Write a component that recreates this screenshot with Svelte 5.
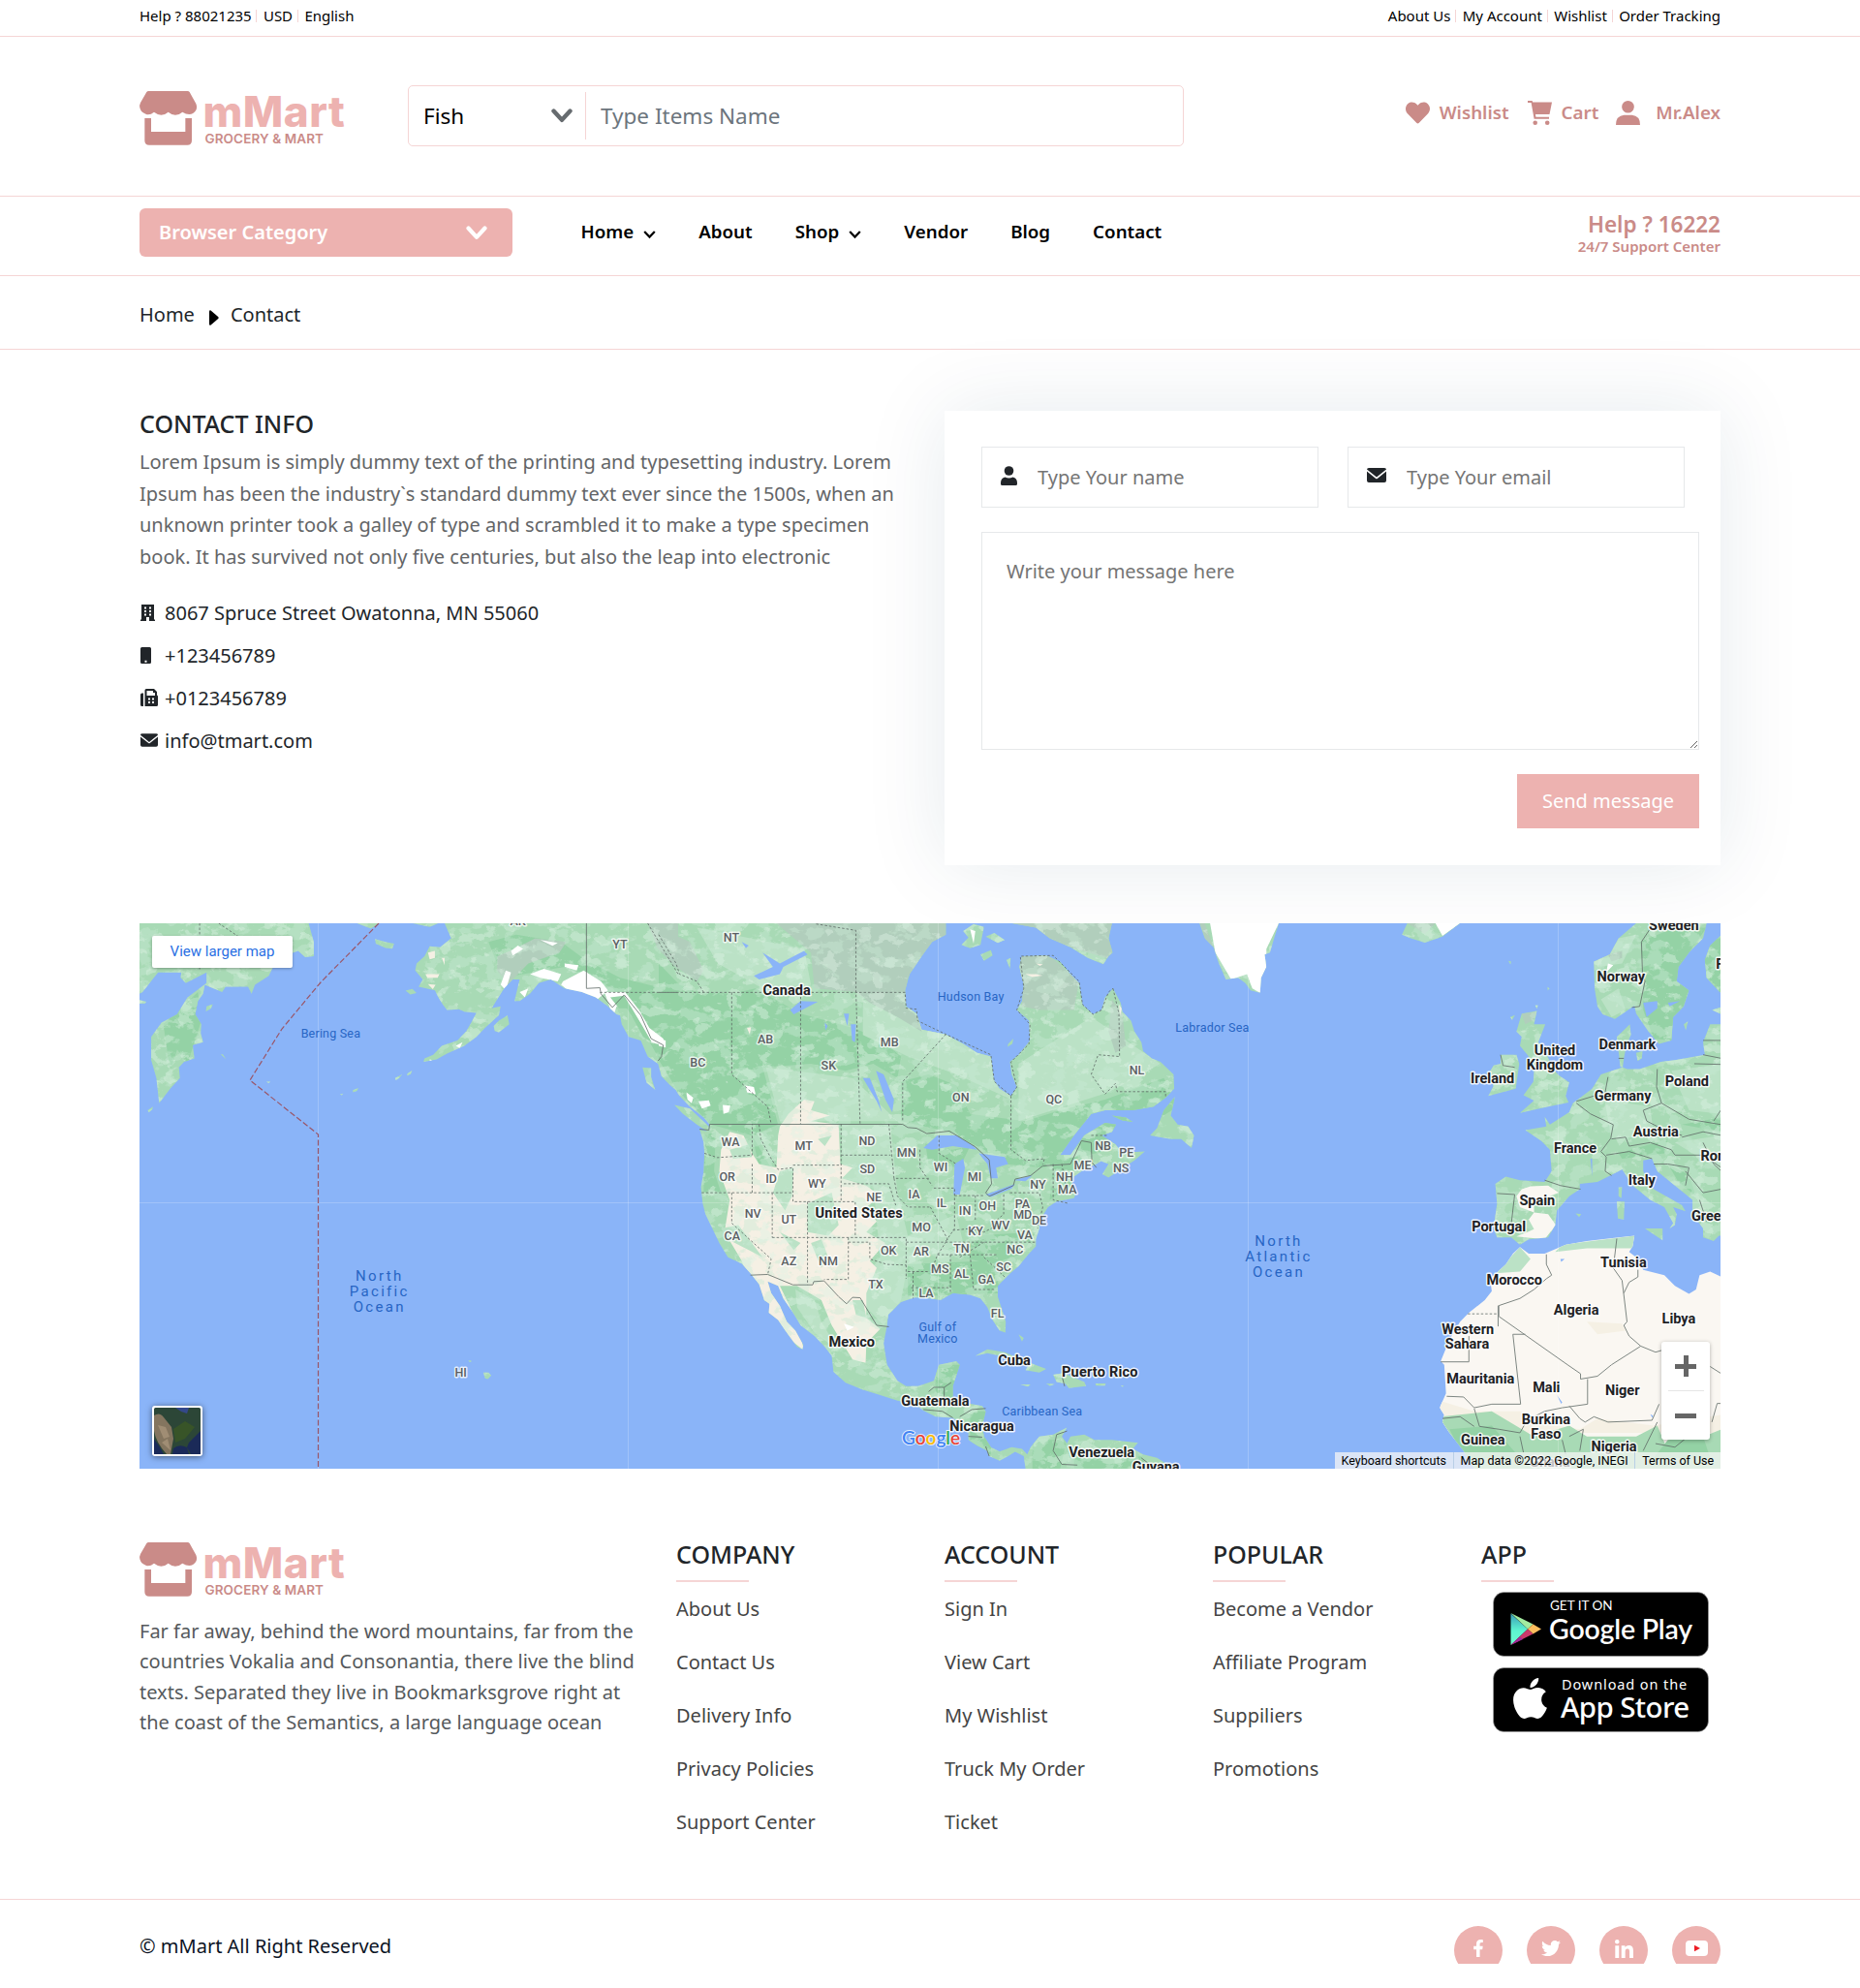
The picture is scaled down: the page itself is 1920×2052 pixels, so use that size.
<script>
  const topLeft = ['Help ? 88021235', 'USD', 'English'];
  const topRight = ['About Us', 'My Account', 'Wishlist', 'Order Tracking'];
  const nav = [
    { label: 'Home', menu: true },
    { label: 'About' },
    { label: 'Shop', menu: true },
    { label: 'Vendor' },
    { label: 'Blog' },
    { label: 'Contact' }
  ];
  const columns = [
    { title: 'COMPANY', links: ['About Us', 'Contact Us', 'Delivery Info', 'Privacy Policies', 'Support Center'] },
    { title: 'ACCOUNT', links: ['Sign In', 'View Cart', 'My Wishlist', 'Truck My Order', 'Ticket'] },
    { title: 'POPULAR', links: ['Become a Vendor', 'Affiliate Program', 'Suppiliers', 'Promotions'] }
  ];
  const heart = 'M462.3 62.6C407.5 15.9 326 24.3 275.7 76.2L256 96.5l-19.7-20.3C186.1 24.3 104.5 15.9 49.7 62.6c-62.8 53.6-66.1 149.8-9.9 207.9l193.5 199.8c12.5 12.9 32.8 12.9 45.3 0l193.5-199.8c56.3-58.1 53-154.3-9.8-207.9z';
  const facebook = 'M279.14 288l14.22-92.66h-88.91v-60.13c0-25.35 12.42-50.06 52.24-50.06h40.42V6.26S260.43 0 225.36 0c-73.22 0-121.08 44.38-121.08 124.72v70.62H22.89V288h81.39v224h100.17V288z';
  const twitter = 'M459.37 151.716c.325 4.548.325 9.097.325 13.645 0 138.72-105.583 298.558-298.558 298.558-59.452 0-114.68-17.219-161.137-47.106 8.447.974 16.568 1.299 25.34 1.299 49.055 0 94.213-16.568 130.274-44.832-46.132-.975-84.792-31.188-98.112-72.772 6.498.974 12.995 1.624 19.818 1.624 9.421 0 18.843-1.3 27.614-3.573-48.081-9.747-84.143-51.98-84.143-102.985v-1.299c13.969 7.797 30.214 12.67 47.431 13.319-28.264-18.843-46.781-51.005-46.781-87.391 0-19.492 5.197-37.36 14.294-52.954 51.655 63.675 129.3 105.258 216.365 109.807-1.624-7.797-2.599-15.918-2.599-24.04 0-57.828 46.782-104.934 104.934-104.934 30.213 0 57.502 12.67 76.67 33.137 23.715-4.548 46.456-13.32 66.599-25.34-7.798 24.366-24.366 44.833-46.132 57.827 21.117-2.273 41.584-8.122 60.426-16.243-14.292 20.791-32.161 39.308-52.628 54.253z';
  const linkedin = 'M100.28 448H7.4V148.9h92.88zM53.79 108.1C24.09 108.1 0 83.5 0 53.8a53.79 53.79 0 0 1 107.58 0c0 29.7-24.1 54.3-53.79 54.3zM447.9 448h-92.68V302.4c0-34.7-.7-79.2-48.29-79.2-48.29 0-55.69 37.7-55.69 76.7V448h-92.78V148.9h89.08v40.8h1.3c12.4-23.5 42.69-48.3 87.88-48.3 94 0 111.28 61.9 111.28 142.3V448z';
  const apple = 'M318.7 268.7c-.2-36.7 16.4-64.4 50-84.8-18.8-26.9-47.2-41.7-84.7-44.6-35.5-2.8-74.3 20.7-88.5 20.7-15 0-49.4-19.7-76.4-19.7C63.3 141.2 4 184.8 4 273.5q0 39.3 14.4 81.2c12.8 36.7 59 126.7 107.2 125.2 25.2-.6 43-17.9 75.8-17.9 31.8 0 48.3 17.9 76.4 17.9 48.6-.7 90.4-82.5 102.6-119.3-65.2-30.7-61.7-90-61.7-91.9zm-56.6-164.2c27.3-32.4 24.8-61.9 24-72.5-24.1 1.4-52 16.4-67.9 34.9-17.5 19.8-27.8 44.3-25.6 71.9 26.1 2 49.9-11.4 69.5-34.3z';

  // Map sheets: each has its own drawing grid, placed on the map by a transform.
  const sheets = {
    w: { x: 140, y: 950, sx: 0.35714, sy: 0.36990 },
    m: { x: 680, y: 950, sx: 0.35714, sy: 0.36990 },
    e: { x: 1220, y: 950, sx: 0.36353, sy: 0.36990 }
  };
  const tf = (s) => `translate(${sheets[s].x} ${sheets[s].y}) scale(${sheets[s].sx} ${sheets[s].sy})`;
  const px = (s, x) => sheets[s].x + x * sheets[s].sx;
  const py = (s, y) => sheets[s].y + y * sheets[s].sy;

  const land = [
    // Kamchatka
    ['w', 'M11 8H500L515 60 515 100 490 103 470 85 440 95 400 125 385 155 345 180 335 205 325 185 260 185 250 200 200 180 195 205 180 225 172 262 190 290 188 315 195 340 165 348 170 385 140 395 125 410 128 440 100 470 68 510 60 440 45 390 45 325 75 285 120 262 150 215 205 175 205 145 145 175 130 160 132 145 65 145 20 200 11 205z'],
    ['w', 'M11 222l20 5-4 5-16 0zM35 530l15-10-2 8-10 8zM205 240l18-6-5 12-15 8zM692 52l30 8 25 5-5 14-20-2-28-12zM640 8h65l-25 15zM800 8h75l-25 10zM780 196l20-5 12 12-18 4z'],
    // Alaska
    ['w', 'M893 8L912 50 880 75 850 72 835 100 812 120 808 140 830 165 818 185 865 195 875 215 888 235 900 250 935 248 950 255 985 258 970 285 955 310 930 335 885 350 860 375 835 385 832 395 870 388 900 372 950 350 985 325 1010 300 1050 265 1055 240 1030 245 1045 220 1065 190 1090 165 1110 165 1095 225 1110 225 1140 205 1165 175 1200 165 1240 190 1290 200 1330 215 1365 240 1390 262 1400 265 1405 290 1425 325 1460 335 1480 380 1510 400 1520 435 1545 460 1575 485H1600V8z'],
    ['w', 'M1035 295l15-15 25-15 5 25-30 22-12-3zM750 440l20-10-8 10-10 6zM785 428l14-9-4 10-10 4zM628 474l16-6-4 8-12 4zM590 486l10-3-4 5zM1005 1262l15 0 8 8-10 10-8-2zM962 1228l8 0 0 4-6 0zM1465 410l25 2 0 25 12 36-25-20zM378 450l12 0-6 4zM246 374l6 0 10 14z'],
    // North and Central America
    ['m', 'M0 8V395L10 430 40 460 60 490 90 520 130 550 147 570 145 590 118 583 130 620 132 650 130 700 122 745 127 790 135 820 160 870 175 900 200 940 240 958 265 985 290 1015 305 1060 320 1070 318 1095 345 1115 370 1150 400 1190 415 1197 418 1185 395 1145 370 1120 350 1075 325 1040 315 1008 345 1020 360 1055 385 1090 410 1130 450 1160 480 1190 500 1215 505 1260 540 1290 590 1310 640 1325 690 1340 740 1350 765 1368 800 1385 850 1388 880 1410 895 1430 895 1450 920 1465 950 1480 955 1495 985 1508 1010 1495 1030 1483 1055 1495 1060 1530H1490L1440 1500 1400 1490 1370 1475 1385 1458 1310 1450 1260 1450 1230 1435 1190 1440 1180 1460 1165 1440 1180 1415 1140 1435 1100 1440 1075 1470 1065 1490 1050 1475 1020 1470 985 1482 960 1470 940 1440 935 1410 945 1370 935 1355 880 1345 850 1335 850 1300 870 1240 860 1230 810 1240 795 1285 750 1300 715 1300 690 1285 660 1240 650 1180 660 1130 663 1100 700 1065 740 1052 780 1055 815 1060 850 1040 900 1045 930 1055 950 1080 965 1115 985 1145 1002 1150 1003 1120 990 1080 980 1050 980 1020 1010 990 1040 965 1070 930 1090 910 1090 890 1100 860 1100 840 1125 800 1150 785 1200 775 1205 765 1190 750 1200 715 1230 695 1265 680 1290 665 1330 650 1310 620 1280 600 1240 610 1190 655 1160 655 1200 600 1250 540 1290 530 1370 530 1430 520 1465 495 1490 470 1488 430 1450 395 1425 385 1400 365 1395 340 1375 310 1365 280 1340 255 1335 230 1313 190 1290 215 1280 250 1255 262 1225 235 1215 175 1190 150 1160 115 1120 98 1050 100 1042 130 1055 180 1050 225 1035 250 1070 280 1073 335 1040 375 1015 395 1020 430 1035 465 1018 490 985 470 968 445 960 380 920 370 880 345 830 318 760 305 745 260 715 240 712 195 725 150 760 100 790 60 830 40 830 8z'],
    // Gulf of St Lawrence, Newfoundland, Vancouver Island
    ['m', 'M1190 655L1230 600 1290 565 1322 570 1310 590 1280 600 1320 625 1340 648 1405 645 1375 670 1300 718 1282 708 1300 680 1260 665zM1492 492L1460 530 1440 580 1420 600 1480 610 1510 610 1540 635 1547 600 1530 575 1500 570 1480 545zM1310 545l40 5 20 12-30-4zM45 515L90 525 145 575 145 592 110 570 70 540z'],
    // Arctic islands
    ['m', 'M880 30l30-20 30 8-10 50-30 10-25-10 20-20zM930 95l30-12 5 15-25 15zM945 45l25-10 30 20-20 8zM1005 110l12-5-2 30zM1020 8H1310L1300 50 1312 90 1300 100 1285 122 1240 105 1190 75 1130 50 1090 20zM1010 345l15-15-3 15-14 8z'],
    // Caribbean
    ['m', 'M915 1215L950 1197 1000 1205 1060 1230 1120 1252 1100 1262 1060 1255 1070 1240 1000 1218 950 1208zM1140 1268l30-5 60 25 5 12-50 5-10-12-25-5zM1045 1295l30 0-8 6zM1262 1292l30 0-2 6-26 0zM1040 1155l10 20 5-10zM1120 1292l25 2-15 5zM1335 1298l10 0-4 4z'],
    // Greenland, Iceland
    ['e', 'M50 8L65 50 90 75 105 120 125 165 160 160 180 175 195 195 222 202 225 160 240 130 235 95 250 90 262 50 275 8z'],
    ['e', 'M625 40L640 8H790L740 45 690 62 650 50zM927 113l8 2-2 8zM1038 186l6 4-5 6z'],
    // British Isles
    ['e', 'M965 260L1008 253 1000 290 1032 290 1012 340 1035 370 1050 410 1070 432 1100 452 1090 490 1098 508 1040 520 960 537 1000 503 970 488 998 450 1000 420 985 380 960 350 965 325 950 310zM905 375L950 375 958 400 948 470 870 490 885 462 870 430 885 405 905 400zM932 270l14-6-8 14zM1003 237l8 0-3 10z'],
    // Scandinavia, Finland
    ['e', 'M1170 115L1215 95 1240 50 1290 8H1490L1480 50 1440 90 1410 130 1405 170 1440 195 1425 240 1395 270 1390 335 1355 345 1325 310 1290 260 1285 238 1230 275 1195 262 1180 240 1172 190zM1532 40L1500 70 1485 110 1490 160 1532 205zM1425 290l12-8-6 25zM1505 250l27-8v20z'],
    // Continental Europe
    ['e', 'M1532 290L1500 290 1480 340 1485 375 1400 390 1360 395 1300 415 1265 415 1245 408 1235 325 1272 290 1275 320 1262 350 1255 385 1252 410 1190 430 1165 470 1110 510 1100 535 1045 570 1030 548 1035 575 975 585 1020 615 1045 640 1050 700 1030 730 960 725 920 715 890 735 895 790 885 860 895 885 935 885 960 905 985 890 1040 885 1060 850 1065 810 1100 770 1130 750 1130 735 1180 730 1220 710 1250 695 1280 740 1330 780 1370 800 1395 845 1385 860 1400 850 1405 820 1395 800 1430 812 1420 795 1340 750 1310 700 1310 670 1335 665 1350 700 1400 740 1450 780 1450 820 1480 860 1480 885 1510 895 1525 880 1532 880zM1315 860L1365 860 1365 893zM1235 785l22 0-2 50-17-3zM1240 745l10 0-2 30-8-5zM1290 370l18-5-2 20-12 8zM1118 818l16 2-6 8z']
  ];
  const africa = 'M960 912L985 930 1030 930 1090 905 1150 895 1240 885 1285 880 1280 910 1270 925 1290 940 1310 975 1370 990 1400 1020 1440 1042 1460 1030 1470 990 1500 980 1532 995V1530H830L800 1480 760 1430 740 1400 745 1380 732 1360 750 1320 745 1240 735 1230 760 1170 790 1120 815 1095 860 1060 880 1035 875 1000 920 960 940 930z';

  // Vegetation and relief, clipped by the coastlines.
  const cover = [
    ['m', '#94d2a5', 'M0 120L60 180 120 200 210 205 280 190 410 260 560 300 640 330 700 380 690 440 620 400 540 420 440 400 300 410 320 480 345 570 270 600 330 700 290 690 270 600 150 570 60 480 0 390zM700 450L780 430 860 460 900 540 1060 560 1160 530 1290 500 1460 440 1500 520 1300 640 1110 690 1000 680 940 640 840 590 700 560z'],
    ['m', '#bbe2c6', 'M110 20L420 80 440 180 300 190 170 120zM590 220L740 250 830 320 960 380 1020 500 860 430 720 380 590 320zM310 410L560 440 690 560H350zM1040 400L1250 270 1450 400 1300 480 1040 560zM530 570H670L690 760 720 880 860 820 880 900 720 960 700 1060 650 1130 560 1040 640 940 620 740 530 720z'],
    ['m', '#b1cebc', 'M340 8H830V45L720 160 712 240 750 270 760 310 690 270 610 230 570 200 450 190 440 90zM0 20L90 60 130 140 110 170 50 130 0 60zM1042 100L1130 98 1215 170 1200 250 1100 250 1050 240zM1310 220l30 40 10 90-30 20-20-60zM1020 8H1310V110L1190 75z'],
    ['m', '#f5f0e4', 'M205 590L245 600 270 650 290 680 340 690 345 600 350 575 375 540 420 500 450 505 440 530 495 545 440 560 520 570 525 680 560 690 530 720 600 740 640 770 600 800 630 840 600 870 655 900 610 950 630 970 600 1040 600 1110 640 1140 600 1180 598 1235 560 1225 500 1130 470 1060 400 1020 350 1020 400 1120 420 1200 300 1110 240 950 190 870 205 780 175 700 180 640z'],
    ['m', '#bbe2c6', 'M205 640L260 625 270 660 215 665zM350 700l40-10-5 80-20 40-35-50zM430 790L500 760 520 850 490 880 430 870zM180 860l50-10 70 90-40-20-60-30zM395 1030L450 1060 470 1120 520 1200 450 1150 400 1080zM350 870l60 30-20 20zM440 900l30-10 20 50-20 30zM460 610l40-10-20 30zM560 1060l30 0 10 50-30-10z'],
    ['m', '#94d2a5', 'M130 600L165 590 160 700 180 760 130 760zM770 620L850 640 900 630 870 690 780 680zM1140 680L1210 650 1190 740 1130 780zM900 880L1090 870 1050 930 960 960 880 940zM720 960L960 950 990 1040 720 1050zM800 1240h80v80l-60 30-20-40zM900 1370h60v120h-60zM1080 1450l100 0-20 80-80 0zM1200 1500l180-20 40 50H1200z'],
    ['w', '#94d2a5', 'M1020 60L1100 40 1230 60 1300 110 1400 160 1568 200V480L1480 330 1380 190 1240 130 1060 160zM80 290L180 200 190 280 150 400 120 360 100 420z'],
    ['w', '#b1cebc', 'M1045 100l50-20 60-30 90 10-20 30-90 30-60 60-30-40zM1480 8h88v130l-60-60z'],
    ['e', '#94d2a5', 'M1300 60L1400 20H1490L1440 90 1405 170 1440 195 1390 335 1340 330 1310 250 1310 120zM1240 650L1380 610 1370 650 1250 665zM1480 50h52v150h-40zM1380 680l60 30 20 60-50-40zM1420 570l112-20v40z'],
    ['e', '#bbe2c6', 'M1190 60L1290 40 1250 120 1180 130zM1190 220l50-30 20 60-40 20zM1200 500L1330 520 1340 600 1220 610zM1390 420L1532 400V540L1440 530zM1400 620l132-20v100z'],
    ['e', '#b1cebc', 'M965 260l45-5-15 25-20 10zM1210 95l40-10 0 20-30 10zM50 8h15l30 80-15 0zM640 8h80l-30 30z']
  ];
  // Snow fields and dry ground, drawn over the vegetation texture.
  const bare = [
    ['w', '#fff', 'M1085 85l20-15 15 10-30 18zM1055 180l15-40 15 5-15 50zM1140 150l40-15 50 15-10 20-50-10zM1240 120l40 5-5 15-35-10zM1235 170l60-30 50 30 20 25-30 25-80-20-25-20zM1355 200l60 0 40 50 30 50 40 30 5 20-40-10-60-100-40 0-10 30zM1110 200l25-10-10 25zM1170 55l50 8-15 8zM925 350l20-10-8 16zM850 388l8 2-8 4z'],
    ['w', '#94d2a5', 'M1372 215l40-5 50 80 30 50-25-15-45-80-25 0z'],
    ['w', '#f5f0e4', 'M845 90l20-5 0 20-15 4zM838 150l40 0-5 10-30 0zM845 178l22 2-8 12zM885 105l8 0 0 20z'],
    ['m', '#fff', 'M80 480l20 15-5 15-12-10zM115 505l30-3 5 15-25 8zM0 330l20 5 0 20-20-5zM535 1125l30 10-20 10zM185 515l22 2-5 18-15 5zM250 460l25 5 5 20-25-5zM900 25l15 5-5 35z'],
    ['m', '#f5f0e4', 'M1060 150l30 0 20 4-30 4zM1090 120l20 2-8 5zM1330 235l8 10-4 20zM255 300l12-2-4 20z'],
    ['e', '#fff', 'M720 8h70l-50 35zM1210 120l15 5-20 20zM80 8H275L240 80 240 130 222 202 200 190 185 150 140 165 95 90z'],
    ['e', '#faf7f2', 'M950 770L965 750 990 742 1040 740 1070 760 1030 775 1000 790 1000 815 1040 820 1062 850 1030 890 950 882 1000 862 985 835 1000 815 960 800z']
  ];
  const africaCover = [
    ['#bbe2c6', 'M1080 905L1285 880 1280 915 1150 915 1060 925zM960 912L990 945 960 980 890 985z'],
    ['#f5f0e4', 'M732 1340L830 1370 960 1370 1060 1410 1130 1420 1180 1390 1340 1410 1532 1380V1430H740zM1150 1120l100 5 10 20-80 10z'],
    ['#a8dab5', 'M735 1385L880 1370 1000 1440 1100 1410 1150 1440 1290 1440 1350 1410 1380 1480 1532 1420V1530H740z'],
    ['#94d2a5', 'M760 1420L880 1410 960 1500H800zM1380 1450l100-10 20 60H1340z']
  ];
  const lakes = [
    ['m', 'M275 155L330 130 300 90 350 120 420 85 430 95 360 130 350 150 290 165zM380 250l30-25 50 2-30 15-40 20zM535 260l15 0-5 35zM555 290l15 0-3 50-8-5zM590 440l20 0 25 60 10 35-15-30zM628 420L650 430 680 500 675 535 655 500zM765 635L805 600 860 600 910 630 920 640 850 630 790 640zM855 680L880 665 885 690 870 765 852 765zM925 650L1000 660 1010 680 975 690 980 720 960 720 950 680zM945 765L1030 735 1020 748 960 772zM1025 725L1080 712 1060 728zM480 285l8 10-6 12zM240 60l20 10-8 8z'],
    ['e', 'M1310 230l40-5 0 20-30 25zM1380 230l35-5-30 15zM1160 665l5 0 0 50zM1075 945l12 0-10 8zM1330 1378l8 4-2 6zM1065 1325l15 20-3 4z']
  ];
  const borders = [
    ['w', 'M1303 8V190L1342 188 1345 205 1378 243 1412 208 1460 265 1490 330 1525 348 1520 380 1510 392'],
    ['m', 'M118 583L145 585 147 569H705L720 578 745 580 775 595 840 588 915 632 955 668 962 735 945 760 955 770 1025 740 1030 722 1075 712 1110 685 1190 680 1222 615 1250 620 1252 675 1265 690M265 990L315 988 388 1017H445L448 1008 478 1006 520 1050 543 1070 560 1052 582 1053 630 1130 665 1134M780 1315L795 1303H825L845 1290M825 1303V1360M765 1365L820 1370 850 1388M870 1385L905 1365 945 1362M895 1440L935 1442M945 1468L955 1495M1180 1425L1150 1435 1140 1480 1165 1518 1210 1520M1395 1500l20 15M1165 1270l8 30'],
    ['e', 'M1340 8L1305 60 1308 150 1315 170 1300 240 1278 243M1210 437L1200 490 1170 490 1120 505M1120 510L1160 540 1225 570 1218 608 1190 645 1205 660 1202 700 1220 712M1350 415L1348 465 1362 510 1310 530 1320 560 1380 590 1420 600M1362 510L1440 555 1532 570M1240 385h15M1480 335L1532 335M1480 375L1532 385M1455 400L1532 402 1532 430M1530 530L1510 560M1420 605L1480 590 1532 600M1220 610L1260 605 1270 630 1330 620 1390 640 1400 655 1480 655 1532 690M1205 655L1270 645 1335 665M1340 680L1380 680 1440 690 1430 740M1430 700L1480 760 1532 750M1470 780l20 60M1030 725L1075 740 1132 750M895 762L945 765 935 850 925 860M905 375L912 405 945 410M1480 620l30 60 22 20'],
    ['e', 'M1035 932L1035 960 1050 990 1035 1000 1000 1030 960 1055 900 1075V1105M898 1075V1133M900 1105L1095 1240 1132 1265V1280L1180 1272 1220 1240 1303 1188 1345 1205 1362 1200M1235 888L1225 970 1250 1005 1264 1120 1255 1130 1270 1160 1303 1188M1295 975V995L1270 1010 1255 1040M735 1232H815V1160M940 1155H975M940 1155L962 1350 880 1350 830 1360 800 1330 752 1328M1152 1280V1350L1080 1360 1030 1370 980 1395 960 1430 900 1420 845 1412 830 1362M1100 1355L1130 1390 1145 1400 1170 1385 1210 1400 1335 1395 1355 1350M1100 1440L1140 1420 1130 1480M1310 1480L1350 1400M1345 1460L1400 1470 1450 1430M1505 1400L1520 1348H1532M1500 1245L1532 1265M740 1390L790 1385 830 1412M960 1440L970 1485M1080 1450L1090 1490']
  ];
  const dashes = [
    ['m', 'M0 201H712L715 245 745 248 748 280 830 318 960 375 970 450 1018 490 1035 465 1018 395 1070 345 1073 290 1035 250 1055 190 1045 100 1140 98 1215 170 1225 235 1255 262 1280 250 1300 200 1313 190M0 40L50 120 60 150 110 170 130 201M455 10L570 28V201L582 568M211 201V430L280 490 315 520 325 568M410 201V568M830 318L705 450V560M1018 490V640L1060 670 1115 665 1110 680M1313 190L1330 260 1332 380 1270 375 1250 430 1290 485 1320 455 1325 478H1465V495M132 650L170 662 270 655V568M270 680V760M124 760H388M211 760V845L325 945 315 988M328 760V885M290 570L295 610 325 665 345 695 388 690V785H568V885M388 683H527M527 568V785M527 655H670M535 735H665L685 795M430 785V1017M328 885H715V1000M548 885V1002H478M548 898H610V945L660 960 715 962M665 568L680 720H785M680 720L690 770 720 800H785M755 640L755 690 790 740M810 600V650L860 680M795 747H855V860L830 895M785 800L835 890 805 935 785 985M715 898H1090M805 933H980M843 933V1040M900 935L910 1030H975M915 768V840M855 768H940M997 765V820L960 850M1015 760H1100L1110 800 1095 860M1140 680V780L1185 790M1165 680L1180 760M720 980H780M735 980V1055M730 1025H840M850 865L900 860 940 870 1000 840M940 940L1000 995M870 940L940 898M1250 600H1300'],
    ['w', 'M1342 201H1568M185 8V140M240 8L320 60M1480 8L1568 150'],
    ['e', 'M812 1098H898']
  ];

  const labels = [
    ['w', 's', 'YT', 1400, 68], ['w', 's', 'AK', 1105, 1], ['w', 's', 'HI', 940, 1262],
    ['w', 'o', 'Bering Sea', 564, 316], ['w', 'O', 'North', 705, 993], ['w', 'O', 'Pacific', 705, 1037], ['w', 'O', 'Ocean', 705, 1081],
    ['m', 's', 'NT', 210, 47], ['m', 's', 'AB', 308, 333], ['m', 's', 'BC', 113, 396], ['m', 's', 'SK', 491, 404], ['m', 's', 'MB', 667, 341],
    ['m', 's', 'ON', 873, 493], ['m', 's', 'QC', 1142, 500], ['m', 's', 'NL', 1382, 417], ['m', 's', 'WA', 207, 619], ['m', 's', 'MT', 419, 629],
    ['m', 's', 'ND', 602, 615], ['m', 's', 'MN', 716, 649], ['m', 's', 'SD', 603, 695], ['m', 's', 'WI', 815, 689], ['m', 's', 'MI', 913, 715],
    ['m', 's', 'OR', 198, 715], ['m', 's', 'ID', 325, 722], ['m', 's', 'WY', 457, 735], ['m', 's', 'NE', 622, 773], ['m', 's', 'IA', 738, 763],
    ['m', 's', 'IL', 817, 788], ['m', 's', 'IN', 885, 809], ['m', 's', 'OH', 950, 798], ['m', 's', 'NY', 1096, 737], ['m', 's', 'NH', 1173, 715],
    ['m', 's', 'MA', 1181, 752], ['m', 's', 'ME', 1225, 682], ['m', 's', 'NB', 1284, 628], ['m', 's', 'PE', 1352, 649], ['m', 's', 'NS', 1336, 690],
    ['m', 's', 'PA', 1051, 791], ['m', 's', 'MD', 1052, 821], ['m', 's', 'DE', 1099, 837], ['m', 's', 'WV', 988, 850], ['m', 's', 'VA', 1058, 877],
    ['m', 's', 'KY', 916, 868], ['m', 's', 'NV', 272, 818], ['m', 's', 'UT', 376, 834], ['m', 's', 'CA', 212, 880], ['m', 's', 'MO', 759, 855],
    ['m', 's', 'AZ', 376, 950], ['m', 's', 'NM', 490, 950], ['m', 's', 'OK', 664, 921], ['m', 's', 'AR', 758, 925], ['m', 's', 'TN', 875, 917],
    ['m', 's', 'NC', 1030, 919], ['m', 's', 'SC', 997, 967], ['m', 's', 'MS', 813, 973], ['m', 's', 'AL', 875, 985], ['m', 's', 'GA', 946, 1002],
    ['m', 's', 'TX', 627, 1015], ['m', 's', 'LA', 773, 1039], ['m', 's', 'FL', 979, 1097],
    ['m', 'o', 'Hudson Bay', 902, 213], ['m', 'o', 'Labrador Sea', 1600, 300], ['m', 'o', 'Gulf of', 806, 1134], ['m', 'o', 'Mexico', 806, 1167], ['m', 'o', 'Caribbean Sea', 1108, 1371],
    ['m', 'c', 'Canada', 370, 197], ['m', 'c wide', 'United States', 579, 819], ['m', 'c', 'Mexico', 558, 1179], ['m', 'c', 'Cuba', 1028, 1228],
    ['m', 'c wide', 'Puerto Rico', 1275, 1261], ['m', 'c', 'Guatemala', 799, 1344], ['m', 'c', 'Nicaragua', 934, 1412], ['m', 'c', 'Venezuela', 1280, 1486], ['m', 'c', 'Guyana', 1437, 1526],
    ['e', 'O', 'North', 275, 896], ['e', 'O', 'Atlantic', 275, 940], ['e', 'O', 'Ocean', 275, 984],
    ['e', 'c', 'Sweden', 1397, 16], ['e', 'c', 'Norway', 1247, 160], ['e', 'c', 'Denmark', 1265, 347], ['e', 'c', 'United', 1059, 365], ['e', 'c', 'Kingdom', 1059, 406],
    ['e', 'c', 'Ireland', 882, 443], ['e', 'c', 'Poland', 1434, 450], ['e', 'c', 'Germany', 1252, 491], ['e', 'c', 'Austria', 1346, 592], ['e', 'c', 'France', 1117, 638],
    ['e', 'c', 'Italy', 1306, 727], ['e', 'c', 'Spain', 1009, 783], ['e', 'c', 'Portugal', 900, 857], ['e', 'c', 'Tunisia', 1254, 956], ['e', 'c', 'Morocco', 944, 1006],
    ['e', 'c', 'Algeria', 1120, 1089], ['e', 'c', 'Libya', 1411, 1113], ['e', 'c', 'Western', 812, 1143], ['e', 'c', 'Sahara', 810, 1184], ['e', 'c', 'Mauritania', 848, 1281],
    ['e', 'c', 'Mali', 1035, 1305], ['e', 'c', 'Niger', 1251, 1313], ['e', 'c', 'Burkina', 1034, 1395], ['e', 'c', 'Faso', 1034, 1436], ['e', 'c', 'Guinea', 855, 1452],
    ['e', 'c', 'Nigeria', 1227, 1469], ['e', 'c', 'Ghana', 1045, 1512], ['e', 'c', 'Finland', 1582, 124], ['e', 'c', 'Romania', 1552, 660], ['e', 'c', 'Greece', 1510, 826]
  ];
</script>

{#snippet logo()}
  <svg class="logo" width="216" height="58" viewBox="0 0 216 58" role="img" aria-label="mMart Grocery and Mart">
    <g transform="scale(.33333) translate(-12 -27)" fill="#ca8b88">
      <path d="M40 27H161q4 0 6 3l20 36q5 12-1 22q-7 11-20 11q-10 0-21-7q-10 9-22 9q-11 0-22-9q-10 9-22 9q-10 0-22-9q-12 10-24 7q-16-5-20-20q-2-8 2-16L34 30q2-3 6-3z" />
      <path d="M28 111h20v42h106v-42h20v69q0 14-14 14H42q-14 0-14-14z" />
    </g>
    <text class="logo-name" x="65.5" y="37">mMart</text>
    <text class="logo-tag" x="67.5" y="54">GROCERY &amp; MART</text>
  </svg>
{/snippet}

{#snippet envelope(w, h)}
  <svg width={w} height={h} viewBox="0 0 20 15"><path fill="#212529" d="M2 0h16q2 0 2 1.6L10 9.6 0 1.6Q0 0 2 0zM0 3.6l9.2 7.3q.8.6 1.6 0L20 3.6V13q0 2-2 2H2q-2 0-2-2z" /></svg>
{/snippet}

<div class="page">
  <div class="topbar">
    <div class="wrap row">
      <div class="mini">{#each topLeft as t}<span>{t}</span>{/each}</div>
      <div class="mini">{#each topRight as t}<span>{t}</span>{/each}</div>
    </div>
  </div>

  <header class="header">
    <div class="wrap row">
      {@render logo()}
      <div class="search">
        <div class="select">
          <span>Fish</span>
          <svg width="22" height="17" viewBox="0 0 22 17"><path d="M2.5 3.5L11 12.8 19.5 3.5" fill="none" stroke="#666b6f" stroke-width="4.4" stroke-linecap="round" stroke-linejoin="round" /></svg>
        </div>
        <input class="query" placeholder="Type Items Name" />
      </div>
      <div class="actions">
        <svg width="25" height="23" viewBox="0 26 512 462"><path fill="#ca8b88" d={heart} /></svg>
        <span class="a1">Wishlist</span>
        <svg width="25" height="25" viewBox="0 0 25 25" fill="#ca8b88">
          <path d="M0 0H4.6L5.2 1.6H25L22.5 14H8L8.4 16.8H22V18.8H6.6L3.6 2H0z" /><circle cx="7.7" cy="22.7" r="2.3" /><circle cx="20.2" cy="22.7" r="2.3" />
        </svg>
        <span class="a2">Cart</span>
        <svg width="25" height="25" viewBox="0 0 25 25" fill="#ca8b88"><circle cx="12.5" cy="6.3" r="6.3" /><path d="M8.5 14.8h8Q25 15.5 25 25H0Q0 15.5 8.5 14.8z" /></svg>
        <span class="a3">Mr.Alex</span>
      </div>
    </div>
  </header>

  <div class="navbar">
    <div class="wrap row">
      <div class="category">
        <span>Browser Category</span>
        <svg width="22" height="17" viewBox="0 0 22 17"><path d="M2.5 3.5L11 12.8 19.5 3.5" fill="none" stroke="#fff" stroke-width="4.2" stroke-linecap="round" stroke-linejoin="round" /></svg>
      </div>
      <nav>
        {#each nav as n}
          <a href="#top">{n.label}{#if n.menu}<svg width="13" height="10" viewBox="0 0 13 10"><path d="M1.2 2L6.5 7.6 11.8 2" fill="none" stroke="#000" stroke-width="2.2" /></svg>{/if}</a>
        {/each}
      </nav>
      <div class="help"><strong>Help ? 16222</strong><span>24/7 Support Center</span></div>
    </div>
  </div>

  <div class="crumbs">
    <div class="wrap row">
      <span>Home</span>
      <svg width="10" height="16" viewBox="0 0 10 16"><path d="M0 1.2Q.2 0 1.6.4L9.2 7q.9 1 0 2L1.6 15.6Q.2 16 0 14.8z" /></svg>
      <span>Contact</span>
    </div>
  </div>

  <section class="contact wrap">
    <div class="info">
      <h5>CONTACT INFO</h5>
      <p>Lorem Ipsum is simply dummy text of the printing and typesetting industry. Lorem<br />Ipsum has been the industry`s standard dummy text ever since the 1500s, when an<br />unknown printer took a galley of type and scrambled it to make a type specimen<br />book. It has survived not only five centuries, but also the leap into electronic</p>
      <ul>
        <li>
          <i><svg width="15" height="17" viewBox="0 0 15 17"><path fill="#212529" fill-rule="evenodd" d="M1 0H14V15.5H15V17H9V13H6V17H0V15.5H1zM4 2.5v2h2v-2zm5 0v2h2v-2zM4 6v2h2V6zm5 0v2h2V6zM4 9.500v2h2v-2zm5 0v2h2v-2z" /></svg></i>
          8067 Spruce Street Owatonna, MN 55060
        </li>
        <li>
          <i><svg width="11" height="17" viewBox="0 0 11 17"><path fill="#212529" fill-rule="evenodd" d="M1.500 0h8Q11 0 11 1.500v14Q11 17 9.500 17h-8Q0 17 0 15.500v-14Q0 0 1.500 0zM4.500 13.700v2h2v-2z" /></svg></i>
          +123456789
        </li>
        <li>
          <i><svg width="18" height="18" viewBox="0 0 18 18"><path fill="#212529" fill-rule="evenodd" d="M1.500 4.500H3V18H1.500Q0 18 0 16.500V6Q0 4.500 1.500 4.500zM4.500 1.500Q4.500 0 6 0h8l3 3v3.500q1 .3 1 1.500v8.500q0 1.500-1.500 1.500H4.500zM6.500 2v5H15V4h-2V2zM8 9.500v2h2v-2zm4 0v2h2v-2zM8 13v2h2v-2zm4 0v2h2v-2z" /></svg></i>
          +0123456789
        </li>
        <li><i>{@render envelope(18, 14)}</i>info@tmart.com</li>
      </ul>
    </div>
    <form class="card">
      <div class="fields">
        <label>
          <svg width="17" height="20" viewBox="0 0 17 20" fill="#212529"><circle cx="8.500" cy="5" r="4.800" /><path d="M4.500 11.500Q8.500 13.500 12.500 11.500 17 12.500 17 17.500V18.500Q17 20 15.500 20H1.500Q0 20 0 18.500V17.500Q0 12.500 4.500 11.500z" /></svg>
          <input placeholder="Type Your name" />
        </label>
        <label>{@render envelope(20, 15)}<input placeholder="Type Your email" /></label>
      </div>
      <textarea placeholder="Write your message here"></textarea>
      <button type="button">Send message</button>
    </form>
  </section>

  <section class="map wrap">
    <svg class="atlas" width="1632" height="563" viewBox="144 953 1632 563">
      <defs>
        <clipPath id="coast">{#each land as [s, d]}<path {d} transform={tf(s)} />{/each}</clipPath>
        <clipPath id="sahara"><path d={africa} transform={tf('e')} /></clipPath>
        <filter id="forest" x="0" y="0" width="100%" height="100%">
          <feTurbulence type="fractalNoise" baseFrequency=".05 .07" numOctaves="5" seed="8" />
          <feColorMatrix values="0 0 0 0 .58  0 0 0 0 .82  0 0 0 0 .65  14 0 0 0 -7.600" />
        </filter>
        <filter id="meadow" x="0" y="0" width="100%" height="100%">
          <feTurbulence type="fractalNoise" baseFrequency=".06 .08" numOctaves="5" seed="31" />
          <feColorMatrix values="0 0 0 0 .73  0 0 0 0 .89  0 0 0 0 .78  14 0 0 0 -8" />
        </filter>
      </defs>
      <rect x="144" y="953" width="1632" height="563" fill="#8ab4f8" />
      <g clip-path="url(#coast)">
        <rect x="144" y="953" width="1632" height="563" fill="#a8dab5" />
        {#each cover as [s, c, d]}<path {d} fill={c} transform={tf(s)} />{/each}
        <rect x="144" y="953" width="1632" height="563" filter="url(#forest)" opacity=".42" />
        <rect x="144" y="953" width="1632" height="563" filter="url(#meadow)" opacity=".42" />
        {#each bare as [s, c, d]}<path {d} fill={c} transform={tf(s)} />{/each}
      </g>
      <g clip-path="url(#sahara)">
        <rect x="1480" y="1260" width="300" height="260" fill="#faf7f2" />
        {#each africaCover as [c, d]}<path {d} fill={c} transform={tf('e')} />{/each}
      </g>
      {#each lakes as [s, d]}<path {d} fill="#8ab4f8" transform={tf(s)} />{/each}
      <path class="grid" d="M328.500 953V1516M648.500 953V1516M968.500 953V1516M1288.500 953V1516M1608.500 953V1516M144 1241.500H1776" />
      {#each borders as [s, d]}<path class="border" {d} transform={tf(s)} />{/each}
      {#each dashes as [s, d]}<path class="border dash" {d} transform={tf(s)} />{/each}
      <path class="dateline" d="M391 953L331 1014 291 1062 258 1115 328.500 1171V1516" />
      {#each labels as [s, kind, t, x, y]}
        <text class="lbl {kind}" x={px(s, x)} y={py(s, y) + 4.300}>{t}</text>
      {/each}
      <text class="google" x="931" y="1491"><tspan fill="#4285f4">G</tspan><tspan fill="#ea4335">o</tspan><tspan fill="#fbbc04">o</tspan><tspan fill="#4285f4">g</tspan><tspan fill="#34a853">l</tspan><tspan fill="#ea4335">e</tspan></text>
    </svg>
    <a class="larger" href="#map">View larger map</a>
    <svg class="satellite" width="52" height="52" viewBox="0 0 52 52">
      <rect width="52" height="52" rx="3" fill="#fff" />
      <rect x="2" y="2" width="48" height="48" rx="1.500" fill="#2c4637" />
      <path d="M2 10Q8 6 12 12L20 22 22 34 19 50H15Q4 38 2 26z" fill="#84755f" />
      <path d="M6 20l8 2 4 10-6 2zM10 38l6-4 3 12z" fill="#a08d74" />
      <path d="M2 34Q8 42 12 50H2zM50 26L38 38 36 43 40 50H50zM22 44Q28 39 36 43L38 50H21z" fill="#1b2a58" />
      <path d="M24 2H38L36 8 30 6z" fill="#34488a" />
      <path d="M22 24L34 16 44 22 34 34 24 38z" fill="#385428" />
    </svg>
    <div class="zoom"><b class="plus"></b><hr /><b class="minus"></b></div>
    <div class="credits"><span>Keyboard shortcuts</span><span>Map data ©2022 Google, INEGI</span><span>Terms of Use</span></div>
  </section>

  <footer class="footer wrap">
    <div class="about">
      {@render logo()}
      <p>Far far away, behind the word mountains, far from the<br />countries Vokalia and Consonantia, there live the blind<br />texts. Separated they live in Bookmarksgrove right at<br />the coast of the Semantics, a large language ocean</p>
    </div>
    {#each columns as col}
      <div class="col">
        <h5>{col.title}</h5>
        <ul>{#each col.links as l}<li>{l}</li>{/each}</ul>
      </div>
    {/each}
    <div class="col last">
      <h5>APP</h5>
      <div class="badges">
        <svg width="223" height="67" viewBox="0 0 223 67">
          <defs><linearGradient id="pl" x2="0" y2="1"><stop offset="0" stop-color="#3a9db8" /><stop offset=".55" stop-color="#5df5d0" /><stop offset="1" stop-color="#6ffbd0" /></linearGradient></defs>
          <rect x=".5" y=".5" width="222" height="66" rx="11" fill="#000" stroke="#a6a6a6" stroke-width=".6" />
          <path d="M18.500 22.500L36 38.500 18.500 55z" fill="url(#pl)" />
          <path d="M18.500 22L41.500 33.500 36 38.500z" fill="#a3eba0" />
          <path d="M41.500 33.500L50 38.500 41.500 43.500 36 38.500z" fill="#fdbd5e" />
          <path d="M36 38.500L41.500 43.500 18.500 55z" fill="#cb3a6c" />
          <path d="M18.500 55L28 46.500 31 49z" fill="#a02a9c" />
          <text class="b-small" x="59" y="19">GET IT ON</text>
          <text class="b-google" x="58" y="48.500">Google Play</text>
        </svg>
        <svg width="223" height="67" viewBox="0 0 223 67">
          <rect x=".5" y=".5" width="222" height="66" rx="11" fill="#000" stroke="#a6a6a6" stroke-width=".6" />
          <path d={apple} fill="#fff" transform="translate(20.700 8) scale(.0925 .0937)" />
          <text class="b-dl" x="71" y="22.500">Download on the</text>
          <text class="b-apple" x="70" y="52">App Store</text>
        </svg>
      </div>
    </div>
  </footer>

  <div class="bottom">
    <div class="wrap row">
      <span>© mMart All Right Reserved</span>
      <div class="social">
        <a href="#fb" aria-label="Facebook"><svg width="12" height="18" viewBox="0 0 320 512"><path fill="#fff" d={facebook} /></svg></a>
        <a href="#tw" aria-label="Twitter"><svg width="20" height="20" viewBox="0 0 512 512"><path fill="#fff" d={twitter} /></svg></a>
        <a href="#in" aria-label="LinkedIn"><svg width="19" height="19" viewBox="0 0 448 448"><path fill="#fff" d={linkedin} /></svg></a>
        <a href="#yt" aria-label="YouTube"><svg width="23" height="16" viewBox="0 0 23 16"><rect width="23" height="16" rx="4" fill="#fff" /><path d="M9 4.800L15 8 9 11.200z" fill="#ed1c24" /></svg></a>
      </div>
    </div>
  </div>
</div>

<style>
  :global(body) { margin: 0; background: #fff; }
  .page { width: 1920px; height: 2052px; overflow: hidden; font-family: 'Noto Sans', sans-serif; font-size: 20px; color: #212529; }
  .page, .page * { box-sizing: border-box; }
  .wrap { width: 1632px; margin: 0 auto; }
  .row { display: flex; }
  svg { display: block; flex: none; }
  a { color: inherit; text-decoration: none; }
  h5, p, ul { margin: 0; padding: 0; font-weight: 400; }
  ul { list-style: none; }

  .topbar { height: 38px; border-bottom: 1px solid #f5d5d5; }
  .topbar .row { justify-content: space-between; height: 32px; align-items: center; }
  .mini { display: flex; font-size: 15px; line-height: 20px; color: #000; }
  .mini span { display: flex; align-items: center; }
  .mini span + span::before { content: ''; width: 1px; height: 13px; margin: 0 6.500px 0 4.800px; background: #f5d5d5; }

  .header { height: 165px; border-bottom: 1px solid #f5d5d5; }
  .header .row { padding-top: 50px; align-items: flex-start; }
  .logo { overflow: visible; }
  .header .logo { margin: 6px 61px 0 0; }
  .logo-name { font: 800 44px Inter, sans-serif; fill: #edb2b0; letter-spacing: .5px; }
  .logo-tag { font: 600 13.500px Inter, sans-serif; fill: #ca8b88; letter-spacing: .1px; }
  .search { width: 801px; height: 63px; border: 1px solid #f5d5d5; border-radius: 5px; display: flex; align-items: center; font-size: 22.500px; color: #000; }
  .select { width: 183px; height: 49px; border-right: 1px solid #f5d5d5; display: flex; align-items: center; justify-content: space-between; padding: 0 13px 0 15px; }
  .query { flex: 1; border: 0; outline: 0; padding: 0 0 0 15px; font: inherit; background: none; }
  .query::placeholder { color: #6c757d; opacity: 1; }
  .actions { display: flex; margin: 15px 0 0 auto; height: 27px; align-items: center; font-size: 18.750px; font-weight: 600; line-height: 25px; color: #ca8b88; }
  .actions span { padding-bottom: 2px; }
  .a1 { margin: 0 19px 0 10px; }
  .a2 { margin: 0 18px 0 10px; }
  .a3 { margin-left: 16px; }

  .navbar { height: 82px; border-bottom: 1px solid #f5d5d5; }
  .navbar .row { padding-top: 12px; }
  .category { width: 385px; height: 50px; border-radius: 6px; background: #edb2b0; color: #fff; font-weight: 600; display: flex; align-items: center; justify-content: space-between; padding: 0 26px 0 20px; }
  .category span { padding-bottom: 2px; }
  nav { display: flex; gap: 44px; margin-left: 70.500px; font-size: 18.750px; font-weight: 600; line-height: 48px; height: 48px; color: #000; }
  nav a { display: flex; align-items: center; }
  nav a svg { margin: 5px 0 0 10px; }
  .help { margin: 4px 0 0 auto; text-align: right; display: flex; flex-direction: column; color: #ca8b88; font-weight: 600; font-size: 15px; line-height: 20px; }
  .help strong { font-size: 22.500px; font-weight: 600; line-height: 25px; }

  .crumbs { height: 76px; border-bottom: 1px solid #f5d5d5; }
  .crumbs .row { padding-top: 25px; line-height: 30px; }
  .crumbs svg { margin: 10px 12px 0 15px; }

  .contact { display: flex; height: 592px; padding-top: 63px; }
  .info { width: 831px; }
  .info h5 { font-size: 25px; line-height: 27px; font-weight: 500; }
  .info p { line-height: 32.500px; color: #636567; margin: 10px 0 20px; white-space: nowrap; }
  .info li { display: flex; align-items: center; height: 43.750px; }
  .info i { width: 26px; padding-left: 1px; }
  .card { width: 801px; height: 469px; background: #fff; box-shadow: 0 0 80px rgba(8, 60, 90, .1); padding: 37px 22px 0 38px; display: flex; flex-direction: column; }
  .fields { display: flex; gap: 30px; }
  label { width: 348px; height: 63px; border: 1px solid #e6e8ea; display: flex; align-items: center; padding: 0 0 0 19px; }
  label svg { margin-bottom: 4px; width: 20px; }
  label:first-child svg { width: 17px; }
  label input { flex: 1; min-width: 0; border: 0; outline: 0; background: none; font: inherit; padding: 0 0 0 21px; }
  label:first-child input { padding-left: 21px; }
  label input::placeholder, textarea::placeholder { color: #757575; opacity: 1; }
  textarea { width: 741px; height: 225px; margin: 25px 0 25px; border: 1px solid #e6e8ea; padding: 25px 25px; font: inherit; line-height: 30px; resize: both; }
  .card button { align-self: flex-end; width: 188px; height: 56px; border: 0; background: #edb2b0; color: #fff; font: inherit; padding: 0 0 2px; }

  .map { position: relative; height: 563px; overflow: hidden; font-family: Roboto, sans-serif; }
  .grid { stroke: #fff; stroke-width: 1; fill: none; opacity: .2; }
  .border { fill: none; stroke: #5f6a66; stroke-width: 1; opacity: .8; vector-effect: non-scaling-stroke; }
  .dash { stroke-dasharray: 2.500 2; }
  .dateline { fill: none; stroke: #9a5668; stroke-width: 1.200; stroke-dasharray: 6 2.500; }
  .lbl { font-family: Roboto, sans-serif; text-anchor: middle; paint-order: stroke; stroke-linejoin: round; }
  .s { font-size: 12.500px; fill: #5b5f63; stroke: rgba(255, 255, 255, .75); stroke-width: 3px; font-weight: 500; }
  .c { font-size: 14.500px; fill: #202124; stroke: rgba(255, 255, 255, .85); stroke-width: 3px; font-weight: 700; }
  .wide { letter-spacing: .2px; }
  .o { font-size: 12.500px; fill: #2765c4; letter-spacing: .2px; }
  .O { font-size: 15px; fill: #2765c4; letter-spacing: 2.300px; }
  .google { font: 600 19px Lato, sans-serif; paint-order: stroke; stroke: rgba(255, 255, 255, .8); stroke-width: 2px; }
  .larger { position: absolute; left: 13px; top: 13px; width: 145px; height: 33px; background: #fff; border-radius: 2px; box-shadow: 0 1px 3px rgba(0, 0, 0, .3); font-size: 15px; line-height: 32px; text-align: center; color: #2a70e3; }
  .satellite { position: absolute; left: 13px; top: 498px; filter: drop-shadow(0 1px 3px rgba(0, 0, 0, .5)); }
  .zoom { position: absolute; left: 1571px; top: 432px; width: 50px; height: 101px; border-radius: 3px; background: #fff; box-shadow: 0 1px 4px rgba(0, 0, 0, .3); display: flex; flex-direction: column; align-items: center; justify-content: space-between; }
  .zoom hr { width: 37px; height: 1px; border: 0; margin: 0; background: #e6e6e6; }
  .zoom b { width: 22px; height: 50px; background: linear-gradient(#666, #666) center / 22px 5px no-repeat; }
  .zoom .plus { background: linear-gradient(#666, #666) center / 22px 5px no-repeat, linear-gradient(#666, #666) center / 5px 22px no-repeat; }
  .credits { position: absolute; right: 0; bottom: 0; height: 17px; display: flex; background: rgba(245, 245, 245, .75); font-size: 12.500px; line-height: 17px; color: #000; }
  .credits span { padding: 0 6.800px; }
  .credits span + span { border-left: 1px solid #b9cfe6; }

  .footer { display: flex; height: 444px; padding-top: 76px; }
  .about { width: 554px; flex: none; }
  .about p { line-height: 31.250px; color: #55595c; margin-top: 18px; white-space: nowrap; }
  .col { width: 277px; flex: none; }
  .last { width: 247px; }
  .col h5 { font-size: 25px; line-height: 24px; height: 41px; font-weight: 500; }
  .col h5::after { content: ''; display: block; width: 75px; height: 2px; background: #f5d5d5; margin-top: 15px; }
  .col li { line-height: 30px; height: 55px; color: #444; }
  .col ul { padding-top: 13px; }
  .badges { display: flex; flex-direction: column; gap: 11px; padding: 10px 0 0 12px; }
  .badges text { fill: #fff; }
  .b-small { font: 400 13.500px Lato, sans-serif; }
  .b-google { font: 600 28.500px Lato, sans-serif; letter-spacing: -.2px; }
  .b-dl { font: 400 14.500px 'Noto Sans', sans-serif; letter-spacing: .9px; }
  .b-apple { font: 500 29.500px 'Noto Sans', sans-serif; letter-spacing: -.6px; }

  .bottom { height: 67px; overflow: hidden; border-top: 1px solid #f5d5d5; color: #0b1324; }
  .bottom .row { justify-content: space-between; padding-top: 27px; line-height: 42px; }
  .social { display: flex; gap: 25px; }
  .social a { width: 50px; height: 50px; border-radius: 50%; background: #edb2b0; display: flex; align-items: center; justify-content: center; padding-bottom: 4px; }
</style>
